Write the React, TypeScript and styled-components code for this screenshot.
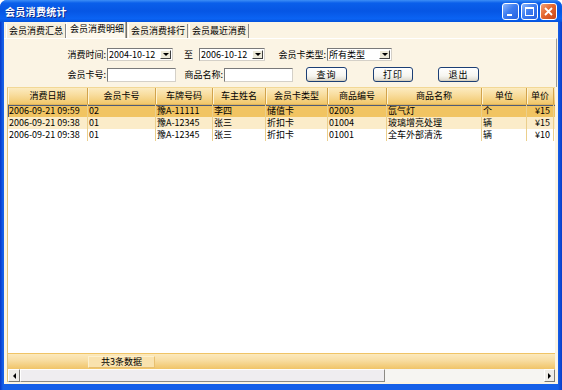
import React from "react";
import styled, { createGlobalStyle } from "styled-components";

interface Record {
    date: string;
    card: string;
    plate: string;
    owner: string;
    cardType: string;
    code: string;
    name: string;
    unit: string;
    price: string;
}

const GlobalStyle = createGlobalStyle`
    html, body {
        margin: 0;
        padding: 0;
        background: #ffffff;
    }
    body {
        font-family: "Noto Sans CJK SC", "Liberation Sans", sans-serif;
        font-size: 9px;
        color: #000;
    }
`;

const columns = [
    { title: "消费日期", width: 80 },
    { title: "会员卡号", width: 68 },
    { title: "车牌号码", width: 57 },
    { title: "车主姓名", width: 53 },
    { title: "会员卡类型", width: 62 },
    { title: "商品编号", width: 59 },
    { title: "商品名称", width: 95 },
    { title: "单位", width: 45 },
    { title: "单价", width: 27 },
];

const records: Record[] = [
    { date: "2006-09-21 09:59", card: "02", plate: "豫A-11111", owner: "李四", cardType: "储值卡", code: "02003", name: "氙气灯", unit: "个", price: "¥15" },
    { date: "2006-09-21 09:38", card: "01", plate: "豫A-12345", owner: "张三", cardType: "折扣卡", code: "01004", name: "玻璃增亮处理", unit: "辆", price: "¥15" },
    { date: "2006-09-21 09:38", card: "01", plate: "豫A-12345", owner: "张三", cardType: "折扣卡", code: "01001", name: "全车外部清洗", unit: "辆", price: "¥10" },
];

// Window frame
const Window = styled.div`
    width: 562px;
    height: 390px;
    display: flex;
    flex-direction: column;
    background: linear-gradient(90deg, #0838c8 0px, #1660e8 3px, #1660e8 558px, #0a3cc8 562px);
    border-radius: 7px 7px 0 0;
    overflow: hidden;
`;

const TitleBar = styled.div`
    height: 22px;
    flex: none;
    display: flex;
    align-items: center;
    padding: 0 5px 0 5px;
    background: linear-gradient(#3d8ef6 0%, #0a5fea 14%, #0656e4 50%, #0b63f3 85%, #0552dc 100%);
`;

const Title = styled.div`
    flex: 1;
    color: #fff;
    font-weight: bold;
    font-size: 10px;
    text-shadow: 1px 1px 0 #0c2a8c;
    letter-spacing: 0.3px;
`;

const CaptionButton = styled.div<{ $close?: boolean }>`
    width: 15px;
    height: 15px;
    margin-left: 2px;
    border: 1px solid #fff;
    border-radius: 3px;
    display: flex;
    align-items: center;
    justify-content: center;
    background: ${(p) =>
        p.$close
            ? "linear-gradient(135deg, #f2a27a 0%, #e5672f 45%, #c8451a 100%)"
            : "linear-gradient(135deg, #8fb8fb 0%, #3d7cf0 45%, #2660e0 100%)"};
`;

const Client = styled.div`
    flex: 1;
    margin: 0 4px 6px 4px;
    background: #fbf4e4;
    display: flex;
    flex-direction: column;
    padding-bottom: 2px;
    min-height: 0;
`;

// Tabs
const TabStrip = styled.div`
    height: 16px;
    flex: none;
    display: flex;
    align-items: flex-end;
    padding-left: 1px;
    background: #fbf4e4;
`;

const Tab = styled.div<{ $active?: boolean }>`
    height: ${(p) => (p.$active ? 16 : 14)}px;
    line-height: 13px;
    padding: 0 2px 0 3px;
    white-space: nowrap;
    background: ${(p) => (p.$active ? "#fdf8ec" : "#f6efdd")};
    border-left: 1px solid ${(p) => (p.$active ? "#ffffff" : "transparent")};
    border-right: 1px solid ${(p) => (p.$active ? "#6f6f6f" : "#8a8a8a")};
    box-shadow: ${(p) => (p.$active ? "inset -1px 0 0 #b0aa9c" : "inset 1px 0 0 #ffffff")};
`;

// Filter panel
const FilterPanel = styled.div`
    height: 49px;
    flex: none;
    box-sizing: border-box;
    padding: 9px 0 0 59px;
    margin-right: 1px;
    border-top: 1px solid #ffffff;
    border-right: 1px solid #9f9c94;
    display: flex;
    flex-direction: column;
    gap: 6px;
`;

const FilterRow = styled.div<{ $h: number }>`
    height: ${(p) => p.$h}px;
    display: flex;
    align-items: center;
`;

const Label = styled.div<{ $w: number; $ml?: number }>`
    width: ${(p) => p.$w}px;
    margin-left: ${(p) => p.$ml || 0}px;
    text-align: right;
    white-space: nowrap;
    flex: none;
`;

const Select = styled.div<{ $w: number; $ml?: number }>`
    width: ${(p) => p.$w}px;
    height: 13px;
    margin-left: ${(p) => p.$ml || 1}px;
    box-sizing: border-box;
    border: 1px solid #7a7a7a;
    border-right-color: #d4d0c8;
    border-bottom-color: #d4d0c8;
    background: #fff;
    display: flex;
    align-items: center;
    flex: none;
`;

const SelectText = styled.div`
    flex: 1;
    padding-left: 1px;
    line-height: 11px;
    white-space: nowrap;
    overflow: hidden;
`;

const DropButton = styled.div`
    width: 11px;
    height: 9px;
    margin-right: 1px;
    box-sizing: border-box;
    border: 1px solid #ffffff;
    border-right-color: #404040;
    border-bottom-color: #404040;
    background: #ece9d8;
    display: flex;
    align-items: center;
    justify-content: center;
`;

const Input = styled.div<{ $w: number }>`
    width: ${(p) => p.$w}px;
    height: 14px;
    margin-left: 1px;
    box-sizing: border-box;
    border: 1px solid #7a7a7a;
    border-right-color: #d4d0c8;
    border-bottom-color: #d4d0c8;
    background: #fff;
    flex: none;
`;

const Button = styled.div<{ $w: number; $ml: number }>`
    width: ${(p) => p.$w}px;
    height: 15px;
    margin-left: ${(p) => p.$ml}px;
    box-sizing: border-box;
    border: 1px solid #1c3f75;
    border-radius: 3px;
    background: linear-gradient(#ffffff 0%, #f6f5f0 60%, #dcd8cc 100%);
    box-shadow: inset 0 -1px 0 #d6d0c0;
    display: flex;
    align-items: center;
    justify-content: center;
    flex: none;
    letter-spacing: 1px;
`;

// Grid
const Grid = styled.div`
    flex: 1;
    min-height: 0;
    margin: 0 3px;
    display: flex;
    flex-direction: column;
    background: #fff;
    border-left: 1px solid #e2c27a;
    border-top: 1px solid #f2d896;
    overflow: hidden;
`;

const HeaderRow = styled.div`
    height: 16px;
    flex: none;
    display: flex;
    background: linear-gradient(#fcebc0 0%, #f8dc9c 45%, #f1c76a 100%);
    border-bottom: 1px solid #e0b458;
`;

const HeaderCell = styled.div<{ $w: number }>`
    width: ${(p) => p.$w}px;
    flex: none;
    box-sizing: border-box;
    line-height: 16px;
    text-align: center;
    white-space: nowrap;
    overflow: hidden;
    border-right: 1px solid #d2a34c;
    box-shadow: inset 1px 0 0 #fff4d4;
`;

const Body = styled.div`
    flex: 1;
    background: #fff;
`;

const Row = styled.div<{ $bg: string; $focus?: boolean }>`
    height: 12px;
    display: flex;
    background: ${(p) => p.$bg};
    box-shadow: ${(p) => (p.$focus ? "inset 1px 1px 0 #4f5c78" : "none")};
`;

const Cell = styled.div<{ $w: number; $pl?: number }>`
    width: ${(p) => p.$w}px;
    flex: none;
    box-sizing: border-box;
    line-height: 12px;
    padding-left: ${(p) => p.$pl ?? 1}px;
    white-space: nowrap;
    overflow: hidden;
    border-right: 1px solid #ebcf8c;
`;

const Footer = styled.div`
    height: 16px;
    flex: none;
    box-sizing: border-box;
    display: flex;
    align-items: center;
    padding-left: 80px;
    border-top: 1px solid #f0c466;
    background: linear-gradient(#fce9bc 0%, #f8dea4 40%, #f0c468 100%);
`;

const FooterCell = styled.div`
    width: 67px;
    height: 12px;
    box-sizing: border-box;
    border: 1px solid #fdf0cc;
    border-right-color: #e8c070;
    border-bottom-color: #e8c070;
    background: #f9e2ae;
    text-align: center;
    line-height: 10px;
`;

const ScrollBar = styled.div`
    height: 13px;
    flex: none;
    display: flex;
    background: #f6f5f2;
`;

const ScrollArrow = styled.div<{ $w: number }>`
    width: ${(p) => p.$w}px;
    flex: none;
    box-sizing: border-box;
    border: 1px solid #ffffff;
    border-right-color: #7c7a74;
    border-bottom-color: #7c7a74;
    background: #efede8;
    display: flex;
    align-items: center;
    justify-content: center;
`;

const Thumb = styled.div`
    width: 365px;
    flex: none;
    box-sizing: border-box;
    border: 1px solid #ffffff;
    border-right-color: #8c8a84;
    border-bottom-color: #8c8a84;
    background: #efedf0;
`;

const Track = styled.div`
    flex: 1;
`;

const Triangle = ({ dir }: { dir: "left" | "right" | "down" }) => {
    const points =
        dir === "down" ? "0,0 6,0 3,3" : dir === "left" ? "3,0 3,6 0,3" : "0,0 0,6 3,3";
    const w = dir === "down" ? 6 : 3;
    const h = dir === "down" ? 3 : 6;
    return (
        <svg width={w} height={h} viewBox={`0 0 ${w} ${h}`}>
            <polygon points={points} fill="#000" />
        </svg>
    );
};

const App = () => {
    return (
        <>
            <GlobalStyle />
            <Window>
                <TitleBar>
                    <Title>会员消费统计</Title>
                    <CaptionButton>
                        <svg width="11" height="11" viewBox="0 0 11 11">
                            <rect x="2" y="8" width="5" height="2" fill="#fff" />
                        </svg>
                    </CaptionButton>
                    <CaptionButton>
                        <svg width="11" height="11" viewBox="0 0 11 11">
                            <rect x="1.5" y="1.5" width="8" height="8" fill="none" stroke="#fff" />
                            <rect x="1" y="1" width="9" height="2" fill="#fff" />
                        </svg>
                    </CaptionButton>
                    <CaptionButton $close>
                        <svg width="11" height="11" viewBox="0 0 11 11">
                            <path d="M2 2 L9 9 M9 2 L2 9" stroke="#fff" strokeWidth="1.8" />
                        </svg>
                    </CaptionButton>
                </TitleBar>
                <Client>
                    <TabStrip>
                        <Tab>会员消费汇总</Tab>
                        <Tab $active>会员消费明细</Tab>
                        <Tab>会员消费排行</Tab>
                        <Tab>会员最近消费</Tab>
                    </TabStrip>
                    <FilterPanel>
                        <FilterRow $h={13}>
                            <Label $w={43}>消费时间:</Label>
                            <Select $w={66}>
                                <SelectText>2004-10-12</SelectText>
                                <DropButton><Triangle dir="down" /></DropButton>
                            </Select>
                            <Label $w={9} $ml={11}>至</Label>
                            <Select $w={66} $ml={6}>
                                <SelectText>2006-10-12</SelectText>
                                <DropButton><Triangle dir="down" /></DropButton>
                            </Select>
                            <Label $w={50} $ml={11}>会员卡类型:</Label>
                            <Select $w={65}>
                                <SelectText>所有类型</SelectText>
                                <DropButton><Triangle dir="down" /></DropButton>
                            </Select>
                        </FilterRow>
                        <FilterRow $h={15}>
                            <Label $w={43}>会员卡号:</Label>
                            <Input $w={69} />
                            <Label $w={41} $ml={6}>商品名称:</Label>
                            <Input $w={69} />
                            <Button $w={41} $ml={13}>查询</Button>
                            <Button $w={40} $ml={26}>打印</Button>
                            <Button $w={41} $ml={25}>退出</Button>
                        </FilterRow>
                    </FilterPanel>
                    <Grid>
                        <HeaderRow>
                            {columns.map((c) => (
                                <HeaderCell key={c.title} $w={c.width}>{c.title}</HeaderCell>
                            ))}
                        </HeaderRow>
                        <Body>
                            {records.map((r, i) => {
                                const values = [r.date, r.card, r.plate, r.owner, r.cardType, r.code, r.name, r.unit, r.price];
                                const bg = i === 0 ? "#f1c462" : i === 1 ? "#fbecc9" : "#ffffff";
                                return (
                                    <Row key={i} $bg={bg} $focus={i === 0}>
                                        {values.map((v, j) => (
                                            <Cell key={j} $w={columns[j].width} $pl={j === 8 ? 8 : 1}>
                                                {v}
                                            </Cell>
                                        ))}
                                    </Row>
                                );
                            })}
                        </Body>
                        <Footer>
                            <FooterCell>共3条数据</FooterCell>
                        </Footer>
                        <ScrollBar>
                            <ScrollArrow $w={12}><Triangle dir="left" /></ScrollArrow>
                            <Thumb />
                            <Track />
                            <ScrollArrow $w={11}><Triangle dir="right" /></ScrollArrow>
                        </ScrollBar>
                    </Grid>
                </Client>
            </Window>
        </>
    );
};

export default App;
